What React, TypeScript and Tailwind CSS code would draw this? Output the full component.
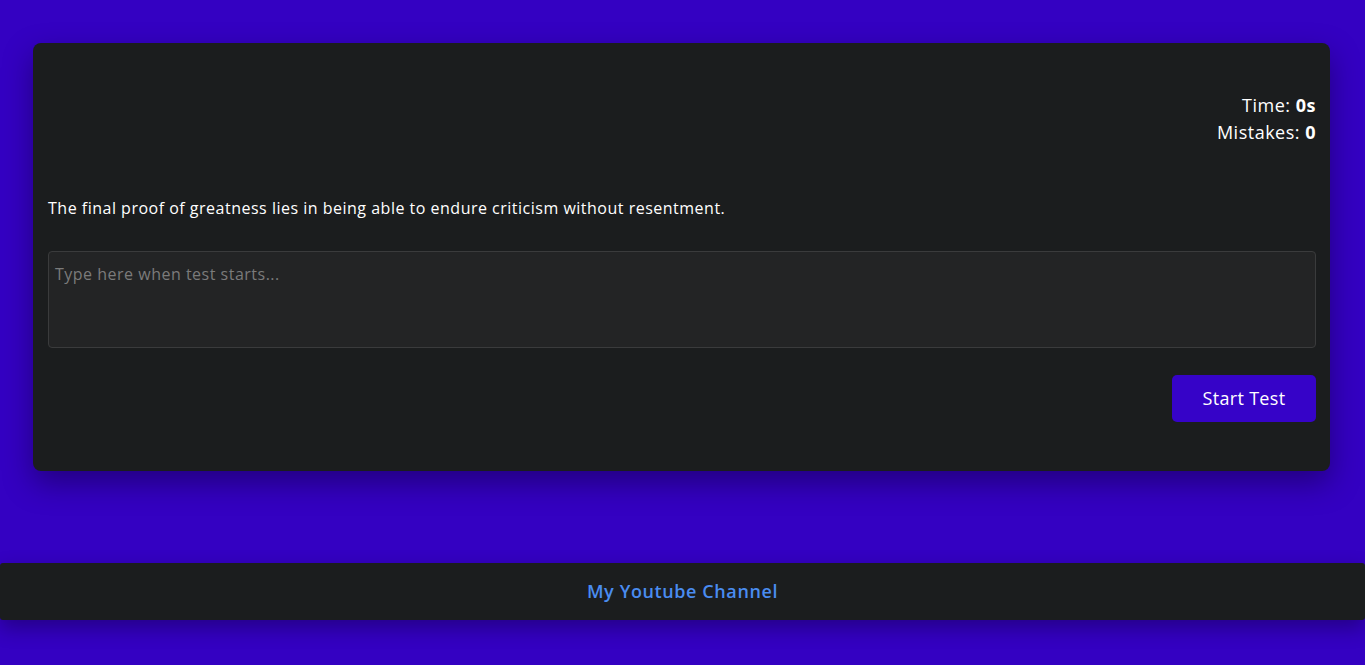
export default function App() {
  return (
    <div className="min-h-[665px] bg-[#3401c2] font-['Open_Sans',sans-serif] tracking-[0.5px] text-white">
      <div className="pl-[33px] pr-[35px] pt-[43px]">
        <div className="rounded-lg bg-[#1b1d1e] pl-[15px] pr-[14px] pt-[49px] pb-[49px] shadow-[0_12px_30px_rgba(0,0,0,0.35)]">
          <div className="text-right text-[18px] leading-[27px]">
            <div>
              Time: <span className="font-bold">0s</span>
            </div>
            <div>
              Mistakes: <span className="font-bold">0</span>
            </div>
          </div>
          <p className="mt-[50px] text-[16px] leading-[24px]">
            The final proof of greatness lies in being able to endure criticism without resentment.
          </p>
          <textarea
            className="mt-[31px] block h-[97px] w-full resize-none rounded-[4px] border border-[#3a3b3c] bg-[#232425] px-[6px] py-[10px] text-[16px] leading-[24px] tracking-[0.5px] text-white outline-none placeholder:text-[#7b7b7b]"
            placeholder="Type here when test starts..."
          />
          <div className="mt-[27px] flex justify-end">
            <button className="h-[47px] w-[144px] rounded-[5px] bg-[#3603c8] text-[18px] tracking-[0.3px] text-white">
              Start Test
            </button>
          </div>
        </div>
      </div>
      <div className="mt-[92px] flex h-[57px] items-center justify-center rounded-[3px] bg-[#1b1d1e] shadow-[0_8px_20px_rgba(0,0,0,0.3)]">
        <a className="text-[18px] font-semibold tracking-[0.6px] text-[#4a8cf0]">My Youtube Channel</a>
      </div>
    </div>
  );
}
